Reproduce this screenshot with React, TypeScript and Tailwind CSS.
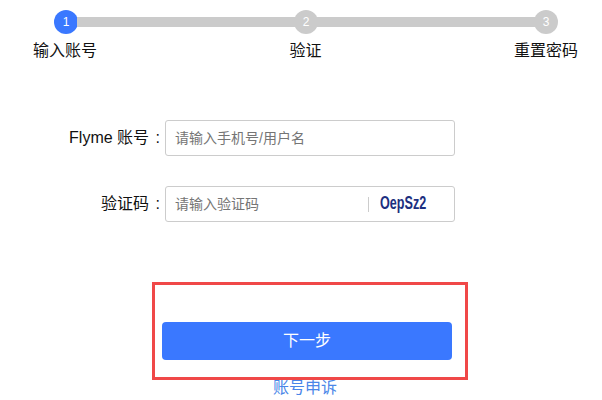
const font = "font-['Liberation_Sans','Noto_Sans_CJK_SC',sans-serif]";

function StepDot({ n, active }: { n: number; active?: boolean }) {
  return (
    <div
      className={`flex h-6 w-6 shrink-0 items-center justify-center rounded-full text-xs text-white ${
        active ? "bg-[#3a78ff]" : "bg-[#cbcbcb]"
      }`}
    >
      {n}
    </div>
  );
}

function Bar() {
  return <div className="-mx-px h-2.5 flex-1 bg-[#cbcbcb]" />;
}

export default function App() {
  return (
    <div className={`relative h-[400px] w-[602px] overflow-hidden bg-white ${font}`}>
      {/* Stepper */}
      <div className="ml-[54px] flex w-[504px] items-center pt-2.5">
        <StepDot n={1} active />
        <Bar />
        <StepDot n={2} />
        <Bar />
        <StepDot n={3} />
      </div>
      <div className="ml-[33px] mt-[5px] flex w-[545px] justify-between text-base leading-6 text-[#111]">
        <span>输入账号</span>
        <span>验证</span>
        <span>重置密码</span>
      </div>

      {/* Form */}
      <div className="mt-[57px] flex items-center">
        <label className="w-[160px] text-right text-base text-[#111]">
          Flyme 账号 <span className="ml-[2px]">:</span>
        </label>
        <div className="ml-[5px] flex h-9 w-[290px] items-center rounded-[3px] border border-[#cccccc] pl-[10px] pr-2.5 text-sm text-[#757575]">
          <span className="-ml-px">请输入手机号/用户名</span>
        </div>
      </div>
      <div className="mt-[30px] flex items-center">
        <label className="w-[160px] text-right text-base text-[#111]">
          验证码 <span className="ml-[2px]">:</span>
        </label>
        <div className="ml-[5px] flex h-9 w-[290px] items-center rounded-[3px] border border-[#cccccc] pl-[10px] text-sm text-[#757575]">
          <span className="-ml-px flex-1">请输入验证码</span>
          <span className="h-[15px] w-px bg-[#cccccc]" />
          <span className="w-[85px] pl-[11px]">
            <span className="inline-block origin-left scale-x-[0.7] text-[18px] font-bold text-[#1c2f80]">
              OepSz2
            </span>
          </span>
        </div>
      </div>

      {/* Button */}
      <button className="ml-[162px] mt-[100px] flex h-[38px] w-[290px] items-center justify-center rounded-[4px] bg-[#3a78ff] text-base text-white">
        下一步
      </button>
      <div className="mt-[18px] w-[610px] text-center text-base leading-5 text-[#4a86e8]">账号申诉</div>

      {/* Annotation box */}
      <div className="absolute left-[152px] top-[282px] h-[98px] w-[316px] border-[3px] border-[#f04848]" />
    </div>
  );
}
